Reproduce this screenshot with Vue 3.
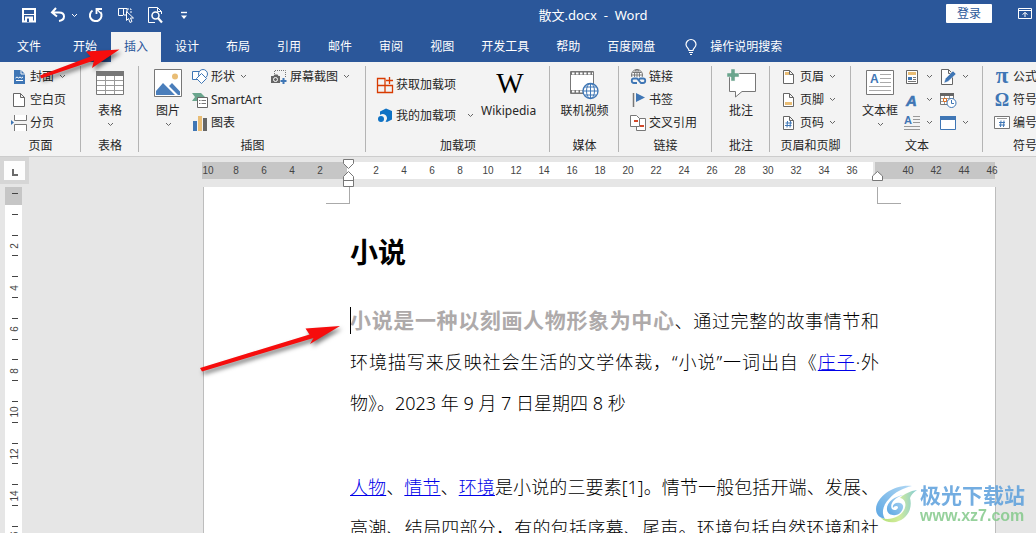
<script setup>
const icons = {
  save: '<path d="M2 2h12v12.500H2z" fill="none" stroke="#fff" stroke-width="2"/><path d="M2 7.500h12" stroke="#fff"/><path d="M4 9.500h8V15H4z" fill="#fff"/><path d="M6 11.500h2V15H6z" fill="#2b579a"/>',
  undo: '<path d="M6 1 2 5.500 7 9.500M2.500 5.500H9c3 0 5 1.500 5 4 0 2.500-2 4-5 4.500" fill="none" stroke="#fff" stroke-width="2"/>',
  redo: '<path d="M4.500 3.500A5.800 5.800 0 1 0 12.500 5" fill="none" stroke="#fff" stroke-width="2"/><path d="M8.500 7V2H14" fill="none" stroke="#fff" stroke-width="1.800"/><path d="m8.500 2 4 4" stroke="#fff" stroke-width="1.500"/>',
  touch: '<path d="M5 8.500H.5v-7h7M5.500 8V1.500H9V8z" fill="none" stroke="#fff"/><path d="M9 2h4v4" fill="none" stroke="#fff" stroke-dasharray="2 1"/><path d="M8.500 4.500v9l2-2 1.500 4 2-1-1.500-3.500h3z" fill="#2b579a" stroke="#fff"/>',
  preview: '<path d="M14.500 7V4.500l-4-4h-9v15H8M10.500.5v4h4" fill="none" stroke="#fff"/><circle cx="8.500" cy="8.500" r="3.500" fill="none" stroke="#fff" stroke-width="1.500"/><path d="m11 11 4 4.500" stroke="#fff" stroke-width="2.200"/>',
  more: '<path d="M1 1.500h6" stroke="#fff" stroke-width="1.400"/><path d="M1 4.500h6L4 8z" fill="#fff"/>',
  ribbon: '<path d="M.5.5h13v10H.5zM.5 2.500h13M7 9V4.500M4.500 6.500 7 4.500l2.500 2" fill="none" stroke="#fff"/>',
  bulb: '<path d="M4 11.500C4 9 1 8.500 1 5.500a5 5 0 0 1 10 0c0 3-3 3.500-3 6zM4 13.500h4M5 15.500h2" fill="none" stroke="#fff" stroke-width="1.200"/>',
  cover: '<path d="M3 1h7l4 4v10H3z" fill="#3f76b5"/><path d="M10 1v4h4" fill="none" stroke="#f3f3f3"/><path d="m4.500 9 1.500-1 1.500 1L9 8l1.500 1L12 8M5 11.500h7" fill="none" stroke="#fff"/>',
  blank: '<path d="M2.500 1.500h7l4 4v9h-11zM9.500 1.500v4h4" fill="#fff" stroke="#666"/>',
  pagebreak: '<path d="M3.500 0v5.500h12V0M3.500 16V9.500h12V16" fill="#fff" stroke="#777"/><path d="m0 5 3 2.500L0 10z" fill="#3f76b5"/>',
  table: '<path d="M.5 2.500h27v23H.5z" fill="#fff" stroke="#777"/><path d="M0 2h28v5H0z" fill="#777"/><path d="M1 11.500h26M1 16.500h26M1 21.500h26M9.500 7v18M18.500 7v18" stroke="#999"/>',
  picture: '<path d="M.5.5h27v27H.5z" fill="#fff" stroke="#777"/><circle cx="21" cy="7.500" r="3" fill="#e9bd75"/><path d="M2 26v-4l7-8 12 12zM15 17l3-3 8 8.500V26h-2z" fill="#4a7ebb"/>',
  shapes: '<path d="M.5 2.500h9v8h-9z" fill="#fff" stroke="#3f76b5"/><circle cx="11" cy="5" r="4.500" fill="#fff" stroke="#3f76b5"/><path d="m9.500 4.500 5 5-5 5-5-5z" fill="#fff" stroke="#3f76b5"/>',
  smartart: '<path d="M0 1h9l5 5H5v3H0l3-4z" fill="#6aa58d"/><path d="M5.500 5.500h10v10h-10z" fill="#fff" stroke="#666"/><path d="M7 8.500h1.500m1 0H14M7 11.500h1.500m1 0H14" stroke="#777"/>',
  chart: '<path d="M1 6h4v10H1z" fill="#3f76b5"/><path d="M6 1h4v15H6z" fill="#e9bd75"/><path d="M11 3h4v13h-4z" fill="#666"/>',
  screenshot: '<path d="M3.500 5V1.500h11V9" fill="none" stroke="#777" stroke-dasharray="1 1"/><path d="M0 7h2.500l1-1.500h3l1 1.500H9v7H0z" fill="#666"/><circle cx="4.500" cy="10.500" r="2" fill="#666" stroke="#fff"/><path d="M12.500 9v6M9.500 12h6" stroke="#3f76b5" stroke-width="2"/>',
  addins: '<path d="M8.500 1.500h-8v14h15v-7H.5M8 1.500v14" fill="none" stroke="#d83b01" stroke-width="1.300"/><path d="M12.500 0v7M9 3.500h7" stroke="#d83b01" stroke-width="1.300"/>',
  myaddins: '<path d="m3 3.500 6-3 6 2.500v8.500L10 14l-1.500-.5A4 4 0 0 0 3 7z" fill="#0f72c4"/><circle cx="4" cy="11" r="3" fill="#0f72c4"/>',
  wiki: '<text x="15" y="24" text-anchor="middle" font-family="Liberation Serif, serif" font-size="29" fill="#000">W</text>',
  video: '<path d="M.5 2.500h23v22H.5z" fill="#fff" stroke="#777"/><path d="M1 4.500h22M1 22.500h13" stroke="#777" stroke-width="3"/><path d="M2 4.500h21M2 22.500h13" stroke="#fff" stroke-width="2" stroke-dasharray="2.500 1.500"/><circle cx="20.500" cy="22" r="7.500" fill="#fff" stroke="#3f76b5" stroke-width="1.300"/><path d="M20.500 14.500v15M13 22h15M14.500 18h12m-12 8h12" stroke="#3f76b5"/><ellipse cx="20.500" cy="22" rx="4" ry="7.500" fill="none" stroke="#3f76b5"/>',
  link: '<circle cx="7" cy="6" r="5.500" fill="#fff" stroke="#777"/><path d="M7 .5v9M1.500 6h11M2.500 3.500h9" stroke="#777"/><ellipse cx="7" cy="6" rx="2.500" ry="5.500" fill="none" stroke="#777"/><path d="M0 8h16v8H0z" fill="#f3f3f3"/><path d="M7 14H4a2.200 2.200 0 0 1 0-4.500h3l4 4.500h2a2.200 2.200 0 0 0 0-4.500h-3l-1.500 1.500" fill="none" stroke="#3f76b5" stroke-width="1.800"/>',
  bookmark: '<path d="M3.500 1v14" stroke="#777" stroke-width="1.500"/><path d="m6 1 9 4.500L6 10z" fill="#3f76b5"/>',
  crossref: '<path d="M6.500 3.500h9v12h-9z" fill="#fff" stroke="#777"/><path d="M.5.5h6l3 3v8h-9z" fill="#fff" stroke="#777"/><path d="M4 5h4v2H4zM10 10h4v2h-4z" fill="#d3492a"/>',
  comment: '<path d="M3.500 4.500h26v18H16L9.500 28v-5.500h-6z" fill="#fff" stroke="#777"/><path d="M5 0h4v4h4v4H9v4H5V8H1V4h4z" fill="#6aa58d" stroke="#f3f3f3" stroke-width="0.500"/>',
  header: '<path d="M2.500 1.500h6l4 4v9h-10zM8.500 1.500v4h4" fill="#fff" stroke="#666"/><path d="M4 3h4v3H4z" fill="#e9bd75"/>',
  footer: '<path d="M2.500 1.500h6l4 4v9h-10zM8.500 1.500v4h4" fill="#fff" stroke="#666"/><path d="M4 10h7v3H4z" fill="#e9bd75"/>',
  pageno: '<path d="M2.500 1.500h6l4 4v9h-10zM8.500 1.500v4h4" fill="#fff" stroke="#666"/><path d="M6.500 6 6 12.500M9.500 6 9 12.500M4.500 8h6.500M4 10.500h6.500" stroke="#3f76b5"/>',
  textbox: '<path d="M.5 1.500h27v24H.5z" fill="#fff" stroke="#777"/><text x="4" y="14" font-family="Liberation Sans, sans-serif" font-weight="bold" font-size="12" fill="#3f76b5">A</text><path d="M14 5.500h11M14 9.500h11M14 13.500h11M3 17.500h22M3 21.500h22" stroke="#aaa"/>',
  parts: '<path d="M2.500 1.500h11v13h-11z" fill="#fff" stroke="#666"/><path d="M4 3h8v3H4z" fill="#e9bd75"/><path d="M4 8h4v3H4z" fill="#3f76b5"/><path d="M9 8.500h3M9 10.500h3M4 12.500h8" stroke="#777"/>',
  wordart: '<text x="2" y="14" font-family="Liberation Sans, sans-serif" font-weight="bold" font-style="italic" font-size="15" fill="#3f76b5" stroke="#3f76b5" stroke-width=".6">A</text>',
  dropcap: '<text x="0" y="9" font-family="Liberation Sans, sans-serif" font-weight="bold" font-size="11" fill="#3f76b5">A</text><path d="M9 1.500h7M9 4.500h7M9 7.500h7M0 11.500h16M0 14.500h16" stroke="#999"/>',
  signature: '<path d="M1.500.5h7l4 4v11h-11zM8.500.5v4h4" fill="#fff" stroke="#666"/><path d="m4 14 1.500-4.500L13 2l3 3-8 7.500z" fill="#3f76b5" stroke="#f3f3f3" stroke-width=".5"/>',
  datetime: '<path d="M.5 1.500h13v11H.5z" fill="#fff" stroke="#777"/><path d="M0 1h14v3H0z" fill="#666"/><path d="M1 6.500h12M1 9.500h12M4.500 4v8M9.500 4v8" stroke="#999"/><path d="M3.500 6.500h3v3h-3z" fill="#fff" stroke="#e07020"/><circle cx="11.500" cy="11" r="4.500" fill="#fff" stroke="#3f76b5"/><path d="M11.500 8v3.500H14" fill="none" stroke="#3f76b5"/>',
  object: '<path d="M.5 1.500h15v13H.5z" fill="#fff" stroke="#3f76b5"/><path d="M0 1h16v4H0z" fill="#3f76b5"/>',
  pi: '<text x="8" y="14" text-anchor="middle" font-family="Liberation Serif, serif" font-weight="bold" font-size="23" fill="#3f76b5">π</text>',
  omega: '<text x="8" y="14" text-anchor="middle" font-family="Liberation Serif, serif" font-weight="bold" font-size="18" fill="#3f76b5">Ω</text>',
  numbering: '<path d="M.5 1.500h15v12H.5z" fill="#fff" stroke="#777"/><path d="M3 3.500h10" stroke="#999"/><path d="M7 5.500 6.500 12M10 5.500 9.500 12M5 7.500h6M5 10h6" stroke="#3f76b5"/>'
}

const quick = [
  { icon: 'save', label: '保存', cls: 'save' },
  { icon: 'undo', label: '撤消', cls: 'undo', drop: true },
  { icon: 'redo', label: '重复', cls: 'redo' },
  { icon: 'touch', label: '触摸模式', cls: 'touch' },
  { icon: 'preview', label: '打印预览', cls: 'preview' }
]
const tabs = ['文件', '开始', '插入', '设计', '布局', '引用', '邮件', '审阅', '视图', '开发工具', '帮助', '百度网盘']

const groups = [
  { name: '页面', cls: 'pages', cols: [{ items: [['cover', '封面', true], ['blank', '空白页'], ['pagebreak', '分页']] }] },
  { name: '表格', cls: 'single', cols: [{ big: 'table', text: '表格', drop: true, h: 28 }] },
  { name: '插图', cls: 'art', cols: [
    { big: 'picture', text: '图片', drop: true, h: 28 },
    { cls: 'c-shapes', items: [['shapes', '形状', true], ['smartart', 'SmartArt'], ['chart', '图表']] },
    { items: [['screenshot', '屏幕截图', true]] }
  ] },
  { name: '加载项', cls: 'addins', cols: [
    { cls: 'tall', items: [['addins', '获取加载项'], ['myaddins', '我的加载项', true]] },
    { big: 'wiki', text: 'Wikipedia', h: 28 }
  ] },
  { name: '媒体', cls: 'media', cols: [{ big: 'video', text: '联机视频', h: 28 }] },
  { name: '链接', cls: 'links', cols: [{ items: [['link', '链接'], ['bookmark', '书签'], ['crossref', '交叉引用']] }] },
  { name: '批注', cls: 'single', cols: [{ big: 'comment', text: '批注', h: 30 }] },
  { name: '页眉和页脚', cls: 'pages', cols: [{ items: [['header', '页眉', true], ['footer', '页脚', true], ['pageno', '页码', true]] }] },
  { name: '文本', cls: 'text', cols: [
    { big: 'textbox', text: '文本框', drop: true, h: 28 },
    { cls: 'bare', items: [['parts', '', true, '文档部件'], ['wordart', '', true, '艺术字'], ['dropcap', '', true, '首字下沉']] },
    { cls: 'bare', items: [['signature', '', true, '签名行'], ['datetime', '', false, '日期和时间'], ['object', '', true, '对象']] }
  ] },
  { name: '符号', cls: 'symbols', cols: [{ items: [['pi', '公式', true], ['omega', '符号', true], ['numbering', '编号']] }] }
]

const leftMarks = [10, 8, 6, 4, 2]
const midMarks = Array.from({ length: 18 }, (_, i) => (i + 1) * 2)
const rightMarks = [40, 42, 44, 46]
const step = 20.8
const ticks = Array.from({ length: 18 }, (_, i) => Math.round(6 + i * step))
const sideMarks = Array.from({ length: 8 }, (_, i) => ({ n: (i + 1) * 2, y: Math.round(59 + i * step * 2) }))
</script>

<template>
  <div class="app">
    <header class="titlebar">
      <div class="quick">
        <button v-for="q in quick" :key="q.icon" type="button" :class="q.cls" :aria-label="q.label">
          <svg width="16" height="16" v-html="icons[q.icon]"></svg>
          <svg v-if="q.drop" class="chev light" width="7" height="5"><path d="m1 1 2.500 2.500L6 1" /></svg>
        </button>
        <button type="button" aria-label="自定义快速访问工具栏"><svg width="8" height="9" v-html="icons.more"></svg></button>
      </div>
      <h1 class="doc-title">散文.docx&nbsp; -&nbsp; Word</h1>
      <div class="account">
        <button type="button" class="login">登录</button>
        <button type="button" aria-label="功能区显示选项"><svg width="14" height="11" v-html="icons.ribbon"></svg></button>
      </div>
    </header>

    <nav class="tabs">
      <button v-for="t in tabs" :key="t" type="button" :class="{ active: t === '插入', file: t === '文件' }">{{ t }}</button>
      <button type="button" class="tell"><svg width="12" height="17" v-html="icons.bulb"></svg>操作说明搜索</button>
    </nav>

    <section class="ribbon">
      <div v-for="g in groups" :key="g.name" class="group" :class="g.cls">
        <div class="cols">
          <template v-for="(c, i) in g.cols" :key="i">
            <button v-if="c.big" type="button" class="big">
              <svg :width="c.h" :height="c.h" v-html="icons[c.big]"></svg>
              <span>{{ c.text }}</span>
              <svg v-if="c.drop" class="chev" width="7" height="5"><path d="m1 1 2.500 2.500L6 1" /></svg>
            </button>
            <div v-else class="col" :class="c.cls">
              <button v-for="it in c.items" :key="it[0]" type="button" class="small" :aria-label="it[3]">
                <svg width="16" height="16" v-html="icons[it[0]]"></svg>
                <span v-if="it[1]">{{ it[1] }}</span>
                <svg v-if="it[2]" class="chev" width="7" height="5"><path d="m1 1 2.500 2.500L6 1" /></svg>
              </button>
            </div>
          </template>
        </div>
        <div class="group-name">{{ g.name }}</div>
      </div>
    </section>

    <main class="work">
      <div class="side">
        <button type="button" class="tabstop" aria-label="左对齐制表符"><svg width="6" height="7"><path d="M1 0v6h5" fill="none" stroke="#6a6a6a" stroke-width="2" /></svg></button>
        <svg class="vruler" width="17">
          <rect width="17" height="100%" fill="#fff" />
          <rect width="17" height="18" fill="#c6c6c6" />
          <path v-for="y in ticks" :key="y" :d="`M7 ${y}.5h6`" stroke="#444" />
          <text v-for="m in sideMarks" :key="m.n" :transform="`translate(13 ${m.y}) rotate(-90)`" text-anchor="middle">{{ m.n }}</text>
        </svg>
      </div>
      <div class="canvas">
        <div class="hruler">
          <div class="seg left"><span v-for="n in leftMarks" :key="n">{{ n }}</span></div>
          <div class="seg mid">
            <span v-for="n in midMarks" :key="n">{{ n }}</span>
            <svg class="indent first" width="11" height="28"><path d="M.5.5h10v4l-5 5-5-5zM.5 27.500h10v-10l-5-5-5 5zM.5 21.500h10" /></svg>
            <svg class="indent last" width="11" height="10"><path d="M.5 9.500h10V5l-5-4.500L.5 5z" /></svg>
          </div>
          <div class="seg right"><span v-for="n in rightMarks" :key="n">{{ n }}</span></div>
        </div>
        <article class="page">
          <i class="crop tl"></i><i class="crop tr"></i>
          <h2>小说</h2>
          <div class="para">
            <p class="full caret"><strong>小说是一种以刻画人物形象为中心</strong>、通过完整的故事情节和</p>
            <p class="full">环境描写来反映社会生活的文学体裁，“小说”一词出自《<a href="#">庄子</a>·外</p>
            <p>物》。2023 年 9 月 7 日星期四 8 秒</p>
          </div>
          <div class="para">
            <p class="full"><a href="#">人物</a>、<a href="#">情节</a>、<a href="#">环境</a>是小说的三要素[1]。情节一般包括开端、发展、</p>
            <p class="full">高潮、结局四部分，有的包括序幕、尾声。环境包括自然环境和社</p>
          </div>
        </article>
      </div>
    </main>

    <svg class="arrows">
      <path d="M40 75.500 90.500 56.500 86 51.500 119.500 49.500 92 68 94 60.500 41 78.500z" />
      <path d="M200 368 309.500 334.500 305.500 328.500 340 326 310 344 313.500 338 202 371.500z" />
    </svg>

    <aside class="mark">
      <svg width="42" height="40" viewBox="0 0 42 40">
        <defs>
          <linearGradient id="sky" x1="1" y1="0" x2="0" y2="1"><stop offset="0" stop-color="#a5d2f3" /><stop offset="1" stop-color="#3f97de" /></linearGradient>
          <linearGradient id="leaf" x1="0" y1="0" x2="1" y2="0"><stop offset="0" stop-color="#a5db62" /><stop offset=".5" stop-color="#cbe98a" /><stop offset="1" stop-color="#6fc3d0" /></linearGradient>
        </defs>
        <path d="M36 1C20-1 1 10 0 24c0 6 4 9 9 10C5 28 7 20 13 14 19 7 27 3 36 1z" fill="url(#sky)" />
        <path d="M28 10C18 11 10 18 11 25c1 6 10 7 14 2 3-4 3-8-1-9-5-1-8 2-7 5 1-2 4-3 5-1 0 3-4 4-6 2-3-5 3-12 12-14z" fill="url(#sky)" />
        <path d="M5 33c9 3 19-1 23-8 3-6 1-11-4-12 4-4 10-7 17-8-4 3-6 5-7 8 3 11-3 21-14 24-6 1-11 0-15-4z" fill="url(#leaf)" />
      </svg>
      <div><b>极光下载站</b><span>www.xz7.com</span></div>
    </aside>
  </div>
</template>

<style>
html, body { margin: 0; overflow: hidden; }
</style>

<style scoped>
.app {
  position: relative;
  display: flex;
  flex-direction: column;
  height: 100vh;
  overflow: hidden;
  background: #e6e6e6;
  color: #262626;
  font: 12px/16px "Noto Sans", "Noto Sans CJK SC", sans-serif;
}
button {
  display: flex;
  align-items: center;
  padding: 0;
  border: 0;
  background: none;
  color: inherit;
  font: inherit;
  white-space: nowrap;
}
svg { display: block; flex: none; overflow: visible; }
.chev { fill: none; stroke: #666; stroke-width: 1; }
.chev.light { stroke: #fff; }

.titlebar {
  display: grid;
  grid-template-columns: 1fr auto 1fr;
  flex: none;
  height: 32px;
  background: #2b579a;
  color: #fff;
}
.quick { display: flex; align-items: center; height: 30px; padding-left: 21px; }
.quick .save { margin-right: 13px; }
.quick .undo { gap: 5px; margin-right: 10px; }
.quick .redo { margin-right: 14px; }
.quick .touch { margin-right: 13px; }
.quick .preview { margin-right: 17px; }
.doc-title { margin: 0 0 0 150px; font-size: 13px; font-weight: 400; line-height: 31px; white-space: nowrap; }
.account { display: flex; justify-content: flex-end; align-items: center; height: 27px; gap: 26px; padding-right: 4px; }
.login { justify-content: center; width: 46px; height: 19px; border-radius: 1px; background: #fff; color: #2b579a; }

.tabs { display: flex; flex: none; gap: 1px; height: 30px; padding-left: 4px; background: #2b579a; color: #fff; }
.tabs button { padding: 0 13px; }
.tabs .file { margin-right: 5px; }
.tabs .active { background: #f3f3f3; color: #2b579a; }
.tabs .tell { gap: 13px; padding-left: 16px; }

.ribbon { display: flex; flex: none; height: 94px; background: #f3f3f3; border-bottom: 1px solid #cdcdcd; }
.group { position: relative; flex: none; box-sizing: border-box; padding-top: 3px; }
.group:not(:last-child)::after { content: ""; position: absolute; top: 4px; right: 0; width: 1px; height: 86px; background: #b4b4b4; }
.cols { display: flex; height: 69px; }
.group-name { line-height: 24px; text-align: center; white-space: nowrap; }
.pages { width: 81px; }
.single { width: 58px; }
.art { width: 227px; }
.addins { width: 184px; }
.media { width: 69px; }
.links { width: 93px; }
.text { width: 132px; }
.symbols { width: 84px; }
.single .cols, .media .cols { justify-content: center; }
.pages .cols { padding-left: 11px; }
.art .cols { padding-left: 12px; }
.addins .cols, .links .cols, .symbols .cols { padding-left: 11px; }
.text .cols { padding-left: 11px; gap: 6px; }
.c-shapes { width: 79px; margin-left: 7px; }
.small { height: 23px; gap: 3px; }
.small .chev { margin-left: 2px; }
.tall { padding-top: 4px; }
.tall .small { height: 31px; }
.tall .chev { margin-left: 8px; }
.bare { width: 30px; }
.bare .small { gap: 4px; }
.big { flex-direction: column; box-sizing: border-box; height: 54px; min-width: 34px; padding-top: 4px; }
.big span { margin-top: auto; }
.big .chev { position: absolute; top: 60px; }
.addins .big { margin-left: 7px; }

.work { display: flex; flex: 1; min-height: 0; }
.side { flex: none; width: 202px; display: flex; flex-direction: column; }
.tabstop { flex: none; justify-content: center; width: 29px; height: 27px; margin-bottom: 3px; padding-top: 4px; border: 4px solid #d6d6d6; background: #fdfdfd; }
.vruler { flex: 1; min-height: 0; margin-left: 5px; overflow: hidden; }
.vruler text { font: 10px "Liberation Sans", sans-serif; fill: #444; }
.canvas { flex: 1; min-width: 0; display: flex; flex-direction: column; padding: 5px 40px 0 0; }
.hruler { display: flex; flex: none; height: 17px; margin-bottom: 8px; background: #c6c6c6; margin-right: 1px; }
.seg { display: flex; font: 10px/17px "Liberation Sans", sans-serif; color: #444; }
.seg span { flex: none; width: 28px; text-align: center; }
.left { justify-content: flex-end; width: 132px; padding-right: 13px; }
.mid { position: relative; flex: 1; min-width: 0; padding-left: 15px; background: #fff; }
.right { width: 101px; padding-left: 19px; border-left: 2px solid #e6e6e6; box-sizing: content-box; }
.indent { position: absolute; fill: #fff; stroke: #777; }
.first { left: -4px; top: -3px; }
.last { right: -10px; top: 9px; z-index: 1; }

.page {
  position: relative;
  flex: 1;
  min-height: 0;
  margin-left: 1px;
  padding: 44px 116px 0 146px;
  border: solid #bdbdbd;
  border-width: 0 1px;
  background: #fff;
  color: #000;
  overflow: hidden;
}
.crop { position: absolute; top: 0; width: 23px; height: 16px; border-bottom: 1px solid #aaa; }
.tl { left: 122px; border-right: 1px solid #aaa; }
.tr { right: 94px; border-left: 1px solid #aaa; }
h2 { margin: 0 0 27px; font-size: 28px; line-height: 42px; }
.para { margin-bottom: 43px; }
p { position: relative; margin: 0; font-size: 18px; font-weight: 300; line-height: 41px; white-space: nowrap; }
.full { text-align: justify; text-align-last: justify; }
.caret::before { content: ""; position: absolute; left: 0; top: 7px; width: 1px; height: 27px; background: #000; }
strong { font-size: 21px; font-weight: 700; color: #aeaaaa; }
a { color: #0000e8; text-decoration: underline; }

.arrows { position: absolute; inset: 0; width: 100%; height: 100%; pointer-events: none; fill: #f60d0d; filter: drop-shadow(2px 3px 2px rgba(0, 0, 0, .5)); }
.mark { position: absolute; right: 11px; bottom: 8px; display: flex; align-items: flex-end; gap: 2px; opacity: .85; }
.mark div { display: flex; flex-direction: column; }
.mark b { font-size: 21px; line-height: 24px; color: #5b9fdc; }
.mark span { font: bold 16px/18px "Liberation Sans", sans-serif; color: #84c98b; }
</style>
